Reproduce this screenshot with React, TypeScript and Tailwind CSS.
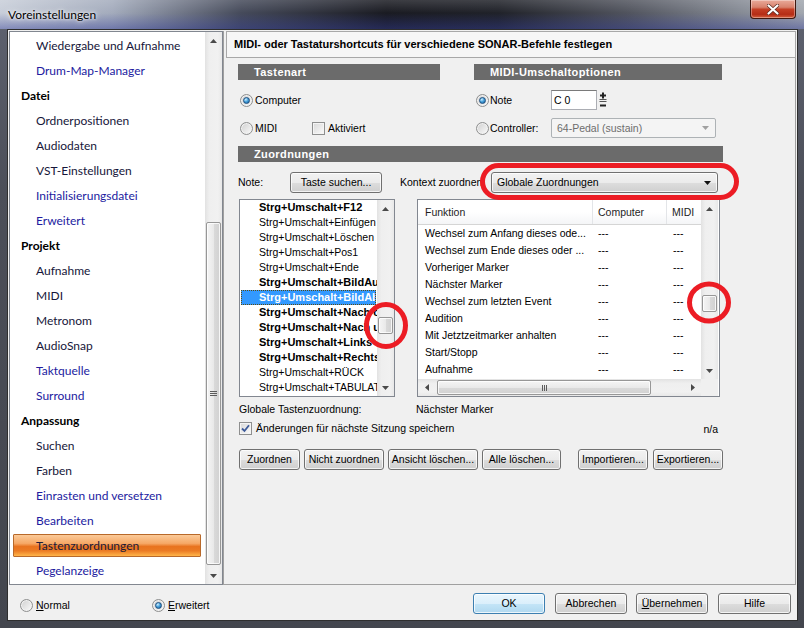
import React from "react";

function Radio({ checked }: { checked?: boolean }) {
  return (
    <span className="w-[13px] h-[13px] shrink-0 rounded-full border border-[#8e8f8f] bg-[linear-gradient(135deg,#cfcfcf,#fbfbfb)] flex items-center justify-center shadow-[inset_0_0_0_1px_#f2f2f2]">
      {checked && (
        <span className="w-[7px] h-[7px] rounded-full border border-[#1d4f80] bg-[radial-gradient(circle_at_35%_30%,#d0efff_0%,#4aa3dc_45%,#105b9b_100%)]" />
      )}
    </span>
  );
}

function Check({ checked }: { checked?: boolean }) {
  return (
    <span className="w-[13px] h-[13px] shrink-0 border border-[#8e8f8f] bg-[linear-gradient(135deg,#d8d8d8,#fbfbfb)] flex items-center justify-center shadow-[inset_0_0_0_1px_#f4f4f4]">
      {checked && (
        <svg width="9" height="9" viewBox="0 0 9 9">
          <path d="M1 4.5 L3.5 7 L8 1.2" fill="none" stroke="#3d5a99" strokeWidth="1.8" />
        </svg>
      )}
    </span>
  );
}

function Btn({ children, cls, def }: { children: React.ReactNode; cls: string; def?: boolean }) {
  return (
    <div
      className={`${cls} h-[21px] shrink-0 flex items-center justify-center rounded-[3px] border text-[10.5px] leading-none text-black shadow-[inset_0_0_0_1px_rgba(255,255,255,0.75)] ${
        def
          ? "border-[#3c7fb1] bg-[linear-gradient(180deg,#eaf6fd_0%,#dbeffb_50%,#c4e5f7_51%,#b0d8f0_100%)]"
          : "border-[#707070] bg-[linear-gradient(180deg,#f2f2f2_0%,#ebebeb_50%,#dddddd_51%,#cfcfcf_100%)]"
      }`}
    >
      {children}
    </div>
  );
}

const Up = () => (
  <svg width="7" height="4" viewBox="0 0 7 4">
    <path d="M0 4 L3.5 0 L7 4Z" fill="#4a4a4a" />
  </svg>
);
const Down = () => (
  <svg width="7" height="4" viewBox="0 0 7 4">
    <path d="M0 0 L3.5 4 L7 0Z" fill="#4a4a4a" />
  </svg>
);
const Left = () => (
  <svg width="4" height="7" viewBox="0 0 4 7">
    <path d="M4 0 L0 3.5 L4 7Z" fill="#4a4a4a" />
  </svg>
);
const Right = () => (
  <svg width="4" height="7" viewBox="0 0 4 7">
    <path d="M0 0 L4 3.5 L0 7Z" fill="#4a4a4a" />
  </svg>
);

function VScroll({ before, thumb, grip }: { before: string; thumb: string; grip?: boolean }) {
  return (
    <div className="w-[17px] h-full shrink-0 flex flex-col bg-[linear-gradient(90deg,#e2e2e2_0%,#efefef_25%,#f1f1f1_75%,#e8e8e8_100%)]">
      <div className="h-[17px] shrink-0 flex items-center justify-center">
        <Up />
      </div>
      <div className="flex-1 flex flex-col">
        <div className={`${before} shrink-0`} />
        <div
          className={`${thumb} shrink-0 mx-[1px] rounded-[2px] border border-[#979797] bg-[linear-gradient(90deg,#f5f5f5_0%,#e9e9e9_50%,#dadada_51%,#d1d1d1_100%)] shadow-[inset_0_0_0_1px_rgba(255,255,255,0.8)] flex flex-col items-center justify-center gap-[1px]`}
        >
          {grip && (
            <>
              <span className="w-[7px] h-[1px] bg-[#5c5c5c]" />
              <span className="w-[7px] h-[1px] bg-[#5c5c5c]" />
              <span className="w-[7px] h-[1px] bg-[#5c5c5c]" />
            </>
          )}
        </div>
      </div>
      <div className="h-[17px] shrink-0 flex items-center justify-center">
        <Down />
      </div>
    </div>
  );
}

function Bar({ children, cls }: { children: React.ReactNode; cls: string }) {
  return (
    <div className={`${cls} h-[16px] bg-[#6b6b6b] flex items-center pl-[16px] text-white font-bold text-[11px] tracking-[0.4px] leading-none`}>
      {children}
    </div>
  );
}

type K = "h" | "d" | "b" | "s";
const tree: [string, K][] = [
  ["Wiedergabe und Aufnahme", "d"],
  ["Drum-Map-Manager", "b"],
  ["Datei", "h"],
  ["Ordnerpositionen", "d"],
  ["Audiodaten", "d"],
  ["VST-Einstellungen", "d"],
  ["Initialisierungsdatei", "b"],
  ["Erweitert", "b"],
  ["Projekt", "h"],
  ["Aufnahme", "d"],
  ["MIDI", "d"],
  ["Metronom", "d"],
  ["AudioSnap", "d"],
  ["Taktquelle", "b"],
  ["Surround", "b"],
  ["Anpassung", "h"],
  ["Suchen", "d"],
  ["Farben", "d"],
  ["Einrasten und versetzen", "b"],
  ["Bearbeiten", "b"],
  ["Tastenzuordnungen", "s"],
  ["Pegelanzeige", "b"],
];

const keys: [string, boolean][] = [
  ["Strg+Umschalt+F12", true],
  ["Strg+Umschalt+Einfügen", false],
  ["Strg+Umschalt+Löschen", false],
  ["Strg+Umschalt+Pos1", false],
  ["Strg+Umschalt+Ende", false],
  ["Strg+Umschalt+BildAuf", true],
  ["Strg+Umschalt+BildAb", true],
  ["Strg+Umschalt+Nach oben", true],
  ["Strg+Umschalt+Nach unten", true],
  ["Strg+Umschalt+Links", true],
  ["Strg+Umschalt+Rechts", true],
  ["Strg+Umschalt+RÜCK", false],
  ["Strg+Umschalt+TABULATOR", false],
];

const fns = [
  "Wechsel zum Anfang dieses ode...",
  "Wechsel zum Ende dieses oder ...",
  "Vorheriger Marker",
  "Nächster Marker",
  "Wechsel zum letzten Event",
  "Audition",
  "Mit Jetztzeitmarker anhalten",
  "Start/Stopp",
  "Aufnahme",
];

export default function App() {
  return (
    <div className="relative w-[804px] h-[628px] overflow-hidden flex flex-col bg-[image:linear-gradient(180deg,#5f6371_0%,#4c4f59_30%,#43464e_100%)] font-['Liberation_Sans',Arial,sans-serif]">
      {/* title bar */}
      <div className="h-[29px] shrink-0 flex items-start bg-[image:linear-gradient(180deg,rgba(255,255,255,0.15)_0%,rgba(0,0,0,0)_45%,rgba(50,60,150,0.45)_100%),linear-gradient(90deg,#c8ced9_0%,#a3abbc_14%,#454a5a_30%,#1a1b22_48%,#202229_62%,#50535d_78%,#858a94_92%,#a2a7af_100%)]">
        <div className="pl-[8px] pt-[7px] font-['Lato',sans-serif] text-[12px] leading-[16px] text-black [text-shadow:0_0_6px_#fff,0_0_3px_#fff]">
          Voreinstellungen
        </div>
        <div className="ml-auto mr-[8px] w-[46px] h-[19px] rounded-b-[4px] border border-t-0 border-[#3f1810] bg-[linear-gradient(180deg,#e9aa9a_0%,#d8826d_40%,#c43f25_52%,#b52d16_80%,#d4603e_100%)] shadow-[inset_0_0_0_1px_rgba(255,255,255,0.35)] flex items-center justify-center">
          <svg width="12" height="11" viewBox="0 0 12 11">
            <path d="M1.5 1.5 L10.5 9.5 M10.5 1.5 L1.5 9.5" stroke="#5a2a20" strokeWidth="3.6" strokeLinecap="round" />
            <path d="M1.5 1.5 L10.5 9.5 M10.5 1.5 L1.5 9.5" stroke="#ffffff" strokeWidth="2.2" strokeLinecap="round" />
          </svg>
        </div>
      </div>

      {/* client */}
      <div className="ml-[7px] mr-[6px] h-[592px] border border-[#2e2e2e] bg-[#f0f0f0] flex flex-col">
        <div className="flex mt-[1px] h-[554px]">
          {/* tree */}
          <div className="ml-[1px] w-[214px] h-full border border-[#828790] bg-white flex">
            <div className="flex-1 pt-[1px] font-['Lato',sans-serif] text-[12px] leading-none">
              {tree.map(([t, k]) =>
                k === "s" ? (
                  <div key={t} className="h-[25px] py-[1px] pl-[3px]">
                    <div className="h-[23px] w-[188px] flex items-center pl-[22px] border border-[#b8692a] rounded-[1px] bg-[linear-gradient(180deg,#fbca98_0%,#f6a866_40%,#e8731f_55%,#eb7b24_75%,#ffb54a_100%)] text-[#1a1a3a]">
                      {t}
                    </div>
                  </div>
                ) : k === "h" ? (
                  <div key={t} className="h-[25px] flex items-center pl-[11px] font-bold text-black">
                    {t}
                  </div>
                ) : (
                  <div
                    key={t}
                    className={`h-[25px] flex items-center pl-[26px] ${k === "b" ? "text-[#221ba0]" : "text-[#16163a]"}`}
                  >
                    {t}
                  </div>
                )
              )}
            </div>
            <VScroll before="h-[173px]" thumb="h-[343px]" grip />
          </div>

          {/* right pane */}
          <div className="w-[573px] h-full border-l border-r border-b border-[#a0a0a0] flex flex-col">
            <div className="ml-[2px] mr-[-1px] h-[27px] border border-[#a8a8a8] bg-[#f6f6f6] flex items-center pl-[7px] font-bold text-[11px] text-black">
              MIDI- oder Tastaturshortcuts für verschiedene SONAR-Befehle festlegen
            </div>

            <div className="pl-[14px] flex flex-col text-[10.5px] leading-none text-black">
              {/* top two columns */}
              <div className="flex mt-[6px]">
                <div className="w-[202px] flex flex-col">
                  <Bar cls="w-[202px]">Tastenart</Bar>
                  <div className="h-[20px] mt-[10px] flex items-center pl-[2px]">
                    <Radio checked />
                    <span className="ml-[2px]">Computer</span>
                  </div>
                  <div className="h-[20px] mt-[8px] flex items-center pl-[2px]">
                    <div className="w-[72px] flex items-center">
                      <Radio />
                      <span className="ml-[2px]">MIDI</span>
                    </div>
                    <Check />
                    <span className="ml-[3px]">Aktiviert</span>
                  </div>
                </div>
                <div className="ml-[34px] w-[248px] flex flex-col">
                  <Bar cls="w-[248px]">MIDI-Umschaltoptionen</Bar>
                  <div className="h-[20px] mt-[10px] flex items-center pl-[2px]">
                    <div className="w-[75px] flex items-center">
                      <Radio checked />
                      <span className="ml-[1px]">Note</span>
                    </div>
                    <div className="w-[46px] h-[20px] border border-[#abadb3] border-t-[#7a7a7a] bg-white flex items-center pl-[2px]">
                      C 0
                    </div>
                    <svg className="ml-[1px]" width="10" height="19" viewBox="0 0 10 19">
                      <path d="M2 4.5h6M5 1.5v6" stroke="#222" strokeWidth="2" />
                      <rect x="1.5" y="8" width="7" height="1" fill="#555" />
                      <rect x="1.5" y="10" width="7" height="1" fill="#555" />
                      <path d="M2 14.5h6" stroke="#222" strokeWidth="2" />
                    </svg>
                  </div>
                  <div className="h-[20px] mt-[8px] flex items-center pl-[2px]">
                    <div className="w-[75px] flex items-center">
                      <Radio />
                      <span className="ml-[1px]">Controller:</span>
                    </div>
                    <div className="w-[165px] h-[20px] rounded-[2px] border border-[#adb2b5] bg-[#f4f4f4] flex items-center pl-[5px] pr-[6px] text-[#6d6d6d]">
                      <span className="flex-1">64-Pedal (sustain)</span>
                      <svg width="7" height="4" viewBox="0 0 7 4">
                        <path d="M0 0 L3.5 4 L7 0Z" fill="#a0a0a0" />
                      </svg>
                    </div>
                  </div>
                </div>
              </div>

              <Bar cls="w-[485px] mt-[8px]">Zuordnungen</Bar>

              {/* note row */}
              <div className="h-[21px] mt-[10px] flex items-center">
                <span className="w-[52px]">Note:</span>
                <Btn cls="w-[92px]">Taste suchen...</Btn>
                <span className="ml-[18px] w-[91px]">Kontext zuordnen</span>
                <div className="w-[227px] h-[21px] rounded-[3px] border border-[#707070] bg-[linear-gradient(180deg,#f2f2f2_0%,#ebebeb_50%,#dddddd_51%,#cfcfcf_100%)] shadow-[inset_0_0_0_1px_rgba(255,255,255,0.75)] flex items-center pl-[5px] pr-[6px]">
                  <span className="flex-1">Globale Zuordnungen</span>
                  <svg width="7" height="4" viewBox="0 0 7 4">
                    <path d="M0 0 L3.5 4 L7 0Z" fill="#111" />
                  </svg>
                </div>
              </div>

              {/* lists */}
              <div className="flex mt-[6px] h-[198px]">
                <div className="ml-[1px] w-[156px] h-full border border-[#828790] bg-white flex">
                  <div className="w-[137px] overflow-hidden">
                    {keys.map(([k, b], i) =>
                      i === 6 ? (
                        <div key={k} className="h-[15px] pl-[1px]">
                          <div className="h-[15px] w-[135px] bg-[#3399ff] border border-dotted border-[#5a4a10] flex items-center pl-[17px] whitespace-nowrap overflow-hidden text-white font-bold text-[11px]">
                            {k}
                          </div>
                        </div>
                      ) : (
                        <div
                          key={k}
                          className={`h-[15px] flex items-center pl-[19px] whitespace-nowrap ${b ? "font-bold text-[11px]" : ""}`}
                        >
                          {k}
                        </div>
                      )
                    )}
                  </div>
                  <VScroll before="h-[100px]" thumb="h-[17px]" />
                </div>

                <div className="ml-[22px] w-[303px] h-full border border-[#828790] bg-white flex flex-col">
                  <div className="flex h-[179px]">
                    <div className="w-[283px] flex flex-col overflow-hidden">
                      <div className="h-[25px] shrink-0 flex border-b border-[#d5d5d5] bg-[linear-gradient(180deg,#ffffff_0%,#ffffff_50%,#f4f5f7_100%)] text-[#1e1e1e]">
                        <div className="w-[175px] shrink-0 border-r border-[#e3e5e8] flex items-center pl-[7px]">Funktion</div>
                        <div className="w-[74px] shrink-0 border-r border-[#e3e5e8] flex items-center pl-[5px]">Computer</div>
                        <div className="w-[34px] shrink-0 flex items-center pl-[5px]">MIDI</div>
                      </div>
                      {fns.map((f) => (
                        <div key={f} className="h-[17px] shrink-0 flex items-center whitespace-nowrap">
                          <div className="w-[175px] shrink-0 pl-[7px]">{f}</div>
                          <div className="w-[74px] shrink-0 pl-[5px]">---</div>
                          <div className="w-[34px] shrink-0 pl-[6px]">---</div>
                        </div>
                      ))}
                    </div>
                    <VScroll before="h-[78px]" thumb="h-[17px]" />
                  </div>
                  <div className="flex h-[17px]">
                    <div className="w-[283px] h-full flex bg-[linear-gradient(180deg,#e2e2e2_0%,#efefef_25%,#f1f1f1_75%,#e8e8e8_100%)]">
                      <div className="w-[17px] shrink-0 flex items-center justify-center">
                        <Left />
                      </div>
                      <div className="flex-1 flex">
                        <div className="w-[2px] shrink-0" />
                        <div className="w-[214px] my-[1px] rounded-[2px] border border-[#979797] bg-[linear-gradient(180deg,#f5f5f5_0%,#e9e9e9_50%,#dadada_51%,#d1d1d1_100%)] shadow-[inset_0_0_0_1px_rgba(255,255,255,0.8)] flex items-center justify-center gap-[1px]">
                          <span className="w-[1px] h-[6px] bg-[#5c5c5c]" />
                          <span className="w-[1px] h-[6px] bg-[#5c5c5c]" />
                          <span className="w-[1px] h-[6px] bg-[#5c5c5c]" />
                        </div>
                      </div>
                      <div className="w-[17px] shrink-0 flex items-center justify-center">
                        <Right />
                      </div>
                    </div>
                    <div className="w-[17px] h-full bg-[#f0f0f0]" />
                  </div>
                </div>
              </div>

              <div className="h-[14px] mt-[5px] flex items-center">
                <span className="ml-[1px] w-[177px]">Globale Tastenzuordnung:</span>
                <span>Nächster Marker</span>
              </div>

              <div className="w-[485px] h-[14px] mt-[5px] flex items-center">
                <span className="ml-[1px]">
                  <Check checked />
                </span>
                <span className="ml-[4px] flex-1">Änderungen für nächste Sitzung speichern</span>
                <span className="mr-[5px] mt-[3px]">n/a</span>
              </div>

              <div className="h-[21px] mt-[14px] flex items-center">
                <Btn cls="ml-[1px] w-[61px]">Zuordnen</Btn>
                <Btn cls="ml-[4px] w-[80px]">Nicht zuordnen</Btn>
                <Btn cls="ml-[4px] w-[90px]">Ansicht löschen...</Btn>
                <Btn cls="ml-[4px] w-[79px]">Alle löschen...</Btn>
                <Btn cls="ml-[17px] w-[70px]">Importieren...</Btn>
                <Btn cls="ml-[5px] w-[70px]">Exportieren...</Btn>
              </div>
            </div>
          </div>
        </div>

        {/* bottom row */}
        <div className="h-[35px] flex items-start text-[10.5px] leading-none text-black">
          <div className="mt-[13px] ml-[12px] w-[132px] h-[14px] flex items-center">
            <Radio />
            <span className="ml-[3px]">
              <span className="underline">N</span>ormal
            </span>
          </div>
          <div className="mt-[13px] h-[14px] flex items-center">
            <Radio checked />
            <span className="ml-[3px]">
              <span className="underline">E</span>rweitert
            </span>
          </div>
          <div className="ml-auto mr-[6px] mt-[8px] flex">
            <Btn cls="w-[72px]" def>
              OK
            </Btn>
            <Btn cls="ml-[10px] w-[72px]">Abbrechen</Btn>
            <Btn cls="ml-[9px] w-[72px]">
              <span>
                <span className="underline">Ü</span>bernehmen
              </span>
            </Btn>
            <Btn cls="ml-[10px] w-[73px]">Hilfe</Btn>
          </div>
        </div>
      </div>

      {/* red annotations */}
      <svg className="absolute left-0 top-0 pointer-events-none" width="804" height="628" viewBox="0 0 804 628">
        <rect x="482.5" y="165.5" width="254" height="32" rx="16" fill="none" stroke="#ec1c24" strokeWidth="5" />
        <ellipse cx="386" cy="325.5" rx="19.5" ry="21" fill="none" stroke="#ec1c24" strokeWidth="5" />
        <ellipse cx="709" cy="302.5" rx="19.5" ry="18.5" fill="none" stroke="#ec1c24" strokeWidth="5" />
      </svg>
    </div>
  );
}
